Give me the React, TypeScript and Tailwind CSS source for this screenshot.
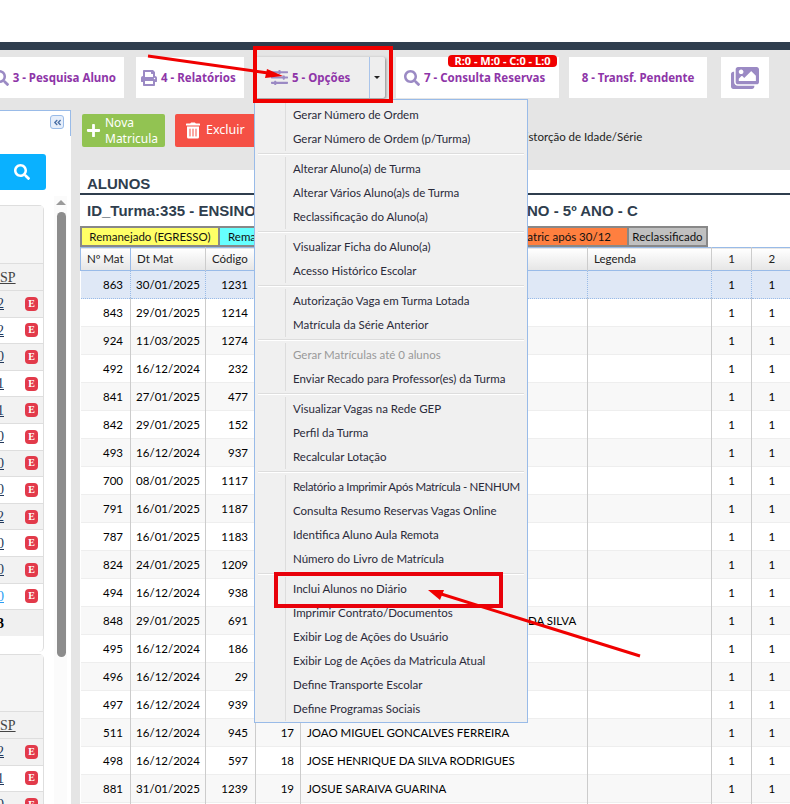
import { FaSearch, FaPrint, FaSlidersH, FaImages, FaTrashAlt, FaPlus, FaAngleDoubleLeft } from "react-icons/fa"

const menuGroups = [
  ["Gerar Número de Ordem", "Gerar Número de Ordem (p/Turma)"],
  ["Alterar Aluno(a) de Turma", "Alterar Vários Aluno(a)s de Turma", "Reclassificação do Aluno(a)"],
  ["Visualizar Ficha do Aluno(a)", "Acesso Histórico Escolar"],
  ["Autorização Vaga em Turma Lotada", "Matrícula da Série Anterior"],
  ["Gerar Matrículas até 0 alunos", "Enviar Recado para Professor(es) da Turma"],
  ["Visualizar Vagas na Rede GEP", "Perfil da Turma", "Recalcular Lotação"],
  ["Relatório a Imprimir Após Matrícula - NENHUM", "Consulta Resumo Reservas Vagas Online", "Identifica Aluno Aula Remota", "Número do Livro de Matrícula"],
  ["Inclui Alunos no Diário", "Imprimir Contrato/Documentos", "Exibir Log de Ações do Usuário", "Exibir Log de Ações da Matricula Atual", "Define Transporte Escolar", "Define Programas Sociais"],
]

const rows = [
  ["863", "30/01/2025", "1231"],
  ["843", "29/01/2025", "1214"],
  ["924", "11/03/2025", "1274"],
  ["492", "16/12/2024", "232"],
  ["841", "27/01/2025", "477"],
  ["842", "29/01/2025", "152"],
  ["493", "16/12/2024", "937"],
  ["700", "08/01/2025", "1117"],
  ["791", "16/01/2025", "1187"],
  ["787", "16/01/2025", "1183"],
  ["824", "24/01/2025", "1209"],
  ["494", "16/12/2024", "938"],
  ["848", "29/01/2025", "691"],
  ["495", "16/12/2024", "186"],
  ["496", "16/12/2024", "29"],
  ["497", "16/12/2024", "939"],
  ["511", "16/12/2024", "945"],
  ["498", "16/12/2024", "597"],
  ["881", "31/01/2025", "1239"],
  ["", "", ""],
]

const names: Record<number, string> = {
  16: "JOAO MIGUEL GONCALVES FERREIRA",
  17: "JOSE HENRIQUE DA SILVA RODRIGUES",
  18: "JOSUE SARAIVA GUARINA",
}

const side1 = ["2", "2", "0", "1", "1", "0", "0", "0", "2", "0", "0", "0"]
const side2 = ["2", "1", "0"]

function SideRow({ value, gray, blue }: { value: string; gray: boolean; blue?: boolean }) {
  return (
    <div className={`h-[26.6px] shrink-0 flex items-center justify-between pr-[5px] border-b border-[#dedede] ${gray ? "bg-[#f2f2f2]" : "bg-white"}`}>
      <div className="w-[4px] flex justify-end">
        <span className={`font-['Liberation_Serif',serif] text-[14px] underline ${blue ? "text-[#2a9df4]" : "text-[#23395b]"}`}>{value}</span>
      </div>
      <span className="w-[13px] h-[14px] rounded-[4px] bg-[#e23a4a] text-white font-['Liberation_Serif',serif] font-bold text-[10px] leading-[14px] text-center">E</span>
    </div>
  )
}

function SideHeader() {
  return (
    <div className="h-[28px] shrink-0 bg-[#f2f2f2] border-y border-[#dedede] flex items-center">
      <span className="font-['Liberation_Serif',serif] text-[14px] underline text-[#444]">SP</span>
    </div>
  )
}

export default function App() {
  return (
    <div className="relative w-[790px] h-[804px] overflow-hidden bg-[#e5e5e5] font-['Lato',sans-serif] text-[11.5px] text-black">
      <div className="h-[42px] bg-white" />
      <div className="h-[8px] bg-[#2f3e4e]" />

      {/* toolbar */}
      <div className="h-[60px] pt-[7px] flex font-['Noto_Sans',sans-serif] font-bold text-[11.5px] text-[#8e35a8]">
        <div className="w-[124px] h-[41px] bg-white flex items-center justify-end pr-[8px] gap-[4px]">
          <FaSearch className="w-[16px] h-[16px] text-[#9b8ac4] shrink-0" />
          <span className="whitespace-nowrap">3 - Pesquisa Aluno</span>
        </div>
        <div className="ml-[12px] w-[108px] h-[41px] bg-white flex items-center pl-[5px] gap-[4px]">
          <FaPrint className="w-[16px] h-[16px] text-[#9b8ac4]" />
          <span>4 - Relatórios</span>
        </div>
        <div className="ml-[11px] w-[130px] h-[41px] bg-[#eeeeee] shadow-[1px_1px_3px_#888] rounded-[2px] flex items-center">
          <div className="w-[115px] h-[41px] pl-[16px] flex items-center gap-[4px] border-r border-[#a9c4ea]">
            <FaSlidersH className="w-[17px] h-[17px] text-[#9b8ac4]" />
            <span>5 - Opções</span>
          </div>
          <span className="ml-[4px] w-0 h-0 border-x-[3px] border-x-transparent border-t-[3px] border-t-[#222]" />
        </div>
        <div className="relative ml-[11px] w-[163px] h-[41px] bg-white flex items-center pl-[8px] gap-[4px]">
          <FaSearch className="w-[16px] h-[16px] text-[#9b8ac4]" />
          <span>7 - Consulta Reservas</span>
          <span className="absolute left-[52px] top-[-2px] w-[109px] h-[12px] rounded-[4px] bg-[#f00000] text-white text-[11px] leading-[12px] text-center whitespace-nowrap">R:0 - M:0 - C:0 - L:0</span>
        </div>
        <div className="ml-[10px] w-[138px] h-[41px] bg-white flex items-center justify-center">8 - Transf. Pendente</div>
        <div className="ml-[14px] w-[48px] h-[41px] bg-white flex items-center justify-center">
          <FaImages className="w-[28px] h-[28px] text-[#9b8ac4]" />
        </div>
      </div>

      <div className="flex">
        {/* sidebar */}
        <aside className="w-[71px] h-[694px] shrink-0 bg-white">
          <div className="h-[26px] border-t border-r border-[#99bbe8] flex justify-end pr-[6px] pt-[4px]">
            <div className="w-[14px] h-[14px] rounded-[3px] border border-[#99bbe8] bg-[#e6eefa] flex items-center justify-center">
              <FaAngleDoubleLeft className="w-[9px] h-[9px] text-[#4a6fa5]" />
            </div>
          </div>
          <div className="flex">
            <div className="w-[54px] shrink-0">
              <div className="mt-[18px] w-[46px] h-[36px] bg-[#0ab1ff] rounded-r-[3px] flex items-center justify-end pr-[16px]">
                <FaSearch className="w-[16px] h-[16px] text-white" />
              </div>
              <div className="mt-[15px] w-[44px] h-[447px] rounded-tr-[5px] rounded-br-[5px] border-t border-r border-[#dedede] bg-white flex flex-col">
                <div className="h-[57px] shrink-0 bg-[#f5f5f5]" />
                <SideHeader />
                {side1.map((v, i) => (
                  <SideRow key={i} value={v} gray={i % 2 === 0} blue={i === 11} />
                ))}
                <div className="h-[26px] shrink-0 bg-[#f0f0f0] flex items-center">
                  <div className="w-[4px] flex justify-end">
                    <span className="font-['Liberation_Serif',serif] font-bold text-[14px]">3</span>
                  </div>
                </div>
              </div>
              <div className="mt-[2px] w-[44px] rounded-tr-[5px] border-t border-r border-[#dedede] bg-white flex flex-col">
                <div className="h-[56px] shrink-0 bg-[#f5f5f5]" />
                <SideHeader />
                {side2.map((v, i) => (
                  <SideRow key={i} value={v} gray={i % 2 === 0} />
                ))}
              </div>
            </div>
            <div className="w-[13px] h-[668px] mt-[60px] bg-[#fbfbfb] flex flex-col items-center">
              <span className="mt-[4px] w-0 h-0 border-x-[5px] border-x-transparent border-b-[5px] border-b-[#9a9a9a]" />
              <div className="mt-[7px] ml-[1px] w-[9px] h-[445px] rounded-[5px] bg-[#8c8c8c]" />
            </div>
          </div>
        </aside>

        {/* main */}
        <main className="ml-[9px] w-[710px] shrink-0">
          <div className="h-[60px] pt-[4px] pl-[2px] flex relative font-['Noto_Sans',sans-serif]">
            <div className="w-[83px] h-[33px] rounded-[2px] bg-[#92c352] text-white flex items-center pl-[4px] gap-[4px] text-[12px] leading-[16px]">
              <FaPlus className="w-[15px] h-[15px] shrink-0" />
              <span>Nova Matricula</span>
            </div>
            <div className="ml-[10px] w-[84px] h-[33px] rounded-[2px] bg-[#f55045] text-white flex items-center pl-[11px] gap-[6px] text-[12.5px]">
              <FaTrashAlt className="w-[14px] h-[17px] shrink-0 text-white" />
              <span>Excluir</span>
            </div>
            <span className="ml-[258px] mt-[14px] whitespace-nowrap font-['Lato',sans-serif] text-[11.5px] text-[#222]">Distorção de Idade/Série</span>
          </div>

          <div className="bg-white h-[634px] overflow-hidden">
            <div className="h-[25px] border-b-2 border-[#2f3e4e] pl-[7px] font-['Liberation_Sans',sans-serif] font-bold text-[15px] leading-[27px] text-[#2f3e4e]">ALUNOS</div>
            <div className="h-[31px] pl-[7px] pt-[2px] flex items-center whitespace-nowrap font-['Liberation_Sans',sans-serif] font-bold text-[15px] text-[#2f3e4e]">
              <span className="w-[440px]">ID_Turma:335 - ENSINO</span>
              <span>NO - 5º ANO - C</span>
            </div>
            <div className="h-[21px] flex text-[11.5px] text-[#111] whitespace-nowrap">
              <div className="w-[140px] border-2 border-[#888] bg-[#ffff66] flex items-center justify-center">Remanejado (EGRESSO)</div>
              <div className="w-[100px] border-y-2 border-r-2 border-[#888] bg-[#66ffff] flex items-center pl-[8px]">Remanejado</div>
              <div className="w-[196px]" />
              <div className="w-[111px] border-y-2 border-[#888] bg-[#ff7f3f] flex items-center justify-end pr-[16px]">Matric após 30/12</div>
              <div className="w-[81px] border-2 border-[#888] bg-[#c0c0c0] flex items-center justify-center">Reclassificado</div>
            </div>

            <table className="table-fixed border-collapse w-[711px]">
              <colgroup>
                <col className="w-[50px]" />
                <col className="w-[75px]" />
                <col className="w-[50px]" />
                <col className="w-[45px]" />
                <col className="w-[287px]" />
                <col className="w-[124px]" />
                <col className="w-[40px]" />
                <col className="w-[40px]" />
              </colgroup>
              <thead>
                <tr className="h-[23px] bg-gradient-to-b from-white to-[#e6e6e6] border-t border-b border-[#99bbe8] text-[#222]">
                  <th className="font-normal text-left pl-[6px] border-l border-r border-[#99bbe8]">Nº Mat</th>
                  <th className="font-normal text-left pl-[6px] border-r border-[#ccc]">Dt Mat</th>
                  <th className="font-normal text-left pl-[6px] border-r border-[#ccc]"><span>Código</span></th>
                  <th className="border-r border-[#ccc]" />
                  <th className="border-r border-[#ccc]" />
                  <th className="font-normal text-left pl-[6px] border-r border-[#ccc]">Legenda</th>
                  <th className="font-normal border-r border-[#ccc]">1</th>
                  <th className="font-normal">2</th>
                </tr>
              </thead>
              <tbody>
                {rows.map((r, i) => {
                  const selected = i === 0
                  const bg = selected ? "bg-[#dfe8f6]" : i % 2 === 0 ? "bg-[#f8f8f8]" : "bg-white"
                  const line = selected ? "border-b border-dotted border-[#99bbe8]" : "border-b border-[#eeeeee]"
                  const col = selected ? "border-r border-dotted border-[#99bbe8]" : "border-r border-[#cccccc]"
                  return (
                    <tr key={i} className={`h-[28px] ${bg} ${line}`}>
                      <td className={`text-right pr-[7px] ${col}`}>{r[0]}</td>
                      <td className={`text-center ${col}`}>{r[1]}</td>
                      <td className={`text-right pr-[7px] ${col}`}>{r[2]}</td>
                      <td className={`text-right pr-[6px] ${col}`}>{names[i] ? i + 1 : ""}</td>
                      <td className={`pl-[6px] whitespace-nowrap ${col}`}>
                        {i === 12 ? <span className="pl-[221px]">DA SILVA</span> : names[i]}
                      </td>
                      <td className={col} />
                      <td className={`text-center ${col}`}>{r[0] && "1"}</td>
                      <td className="text-center">{r[0] && "1"}</td>
                    </tr>
                  )
                })}
              </tbody>
            </table>
          </div>
        </main>
      </div>

      {/* opened dropdown */}
      <div className="absolute left-[254px] top-[99px] w-[274px] h-[624px] border border-[#99bbe8] bg-[#f0f0f0] pt-[3px] text-[#2a2a3a]">
        {menuGroups.map((group, gi) => (
          <div key={gi}>
            {gi > 0 && (
              <div className="mx-[3px] my-[2px] h-[2px] border-t border-[#dddddd] border-b border-b-white" />
            )}
            {group.map((item) => (
              <div
                key={item}
                className={`ml-[30px] h-[24px] border-l border-[#dddddd] pl-[7px] leading-[24px] whitespace-nowrap ${item.startsWith("Gerar Matrículas") ? "text-[#999999]" : ""} ${item.startsWith("Relatório") ? "tracking-[-0.3px]" : ""}`}
              >
                {item}
              </div>
            ))}
          </div>
        ))}
      </div>

      {/* red annotations drawn on the screenshot */}
      <div className="absolute left-[253px] top-[46px] w-[140px] h-[57px] border-4 border-[#f00000]" />
      <div className="absolute left-[274px] top-[572px] w-[229px] h-[36px] border-4 border-[#e8000a]" />
      <svg className="absolute left-0 top-0 pointer-events-none" width="790" height="804" viewBox="0 0 790 804">
        <path d="M148 56 L268 73" stroke="#f00000" strokeWidth="3" fill="none" />
        <path d="M283 76 L267 69 L265 78 Z" fill="#f00000" />
        <path d="M640 656 L438 593" stroke="#f00000" strokeWidth="3" fill="none" />
        <path d="M428 590 L444 590 L440 600 Z" fill="#f00000" />
      </svg>
    </div>
  )
}
